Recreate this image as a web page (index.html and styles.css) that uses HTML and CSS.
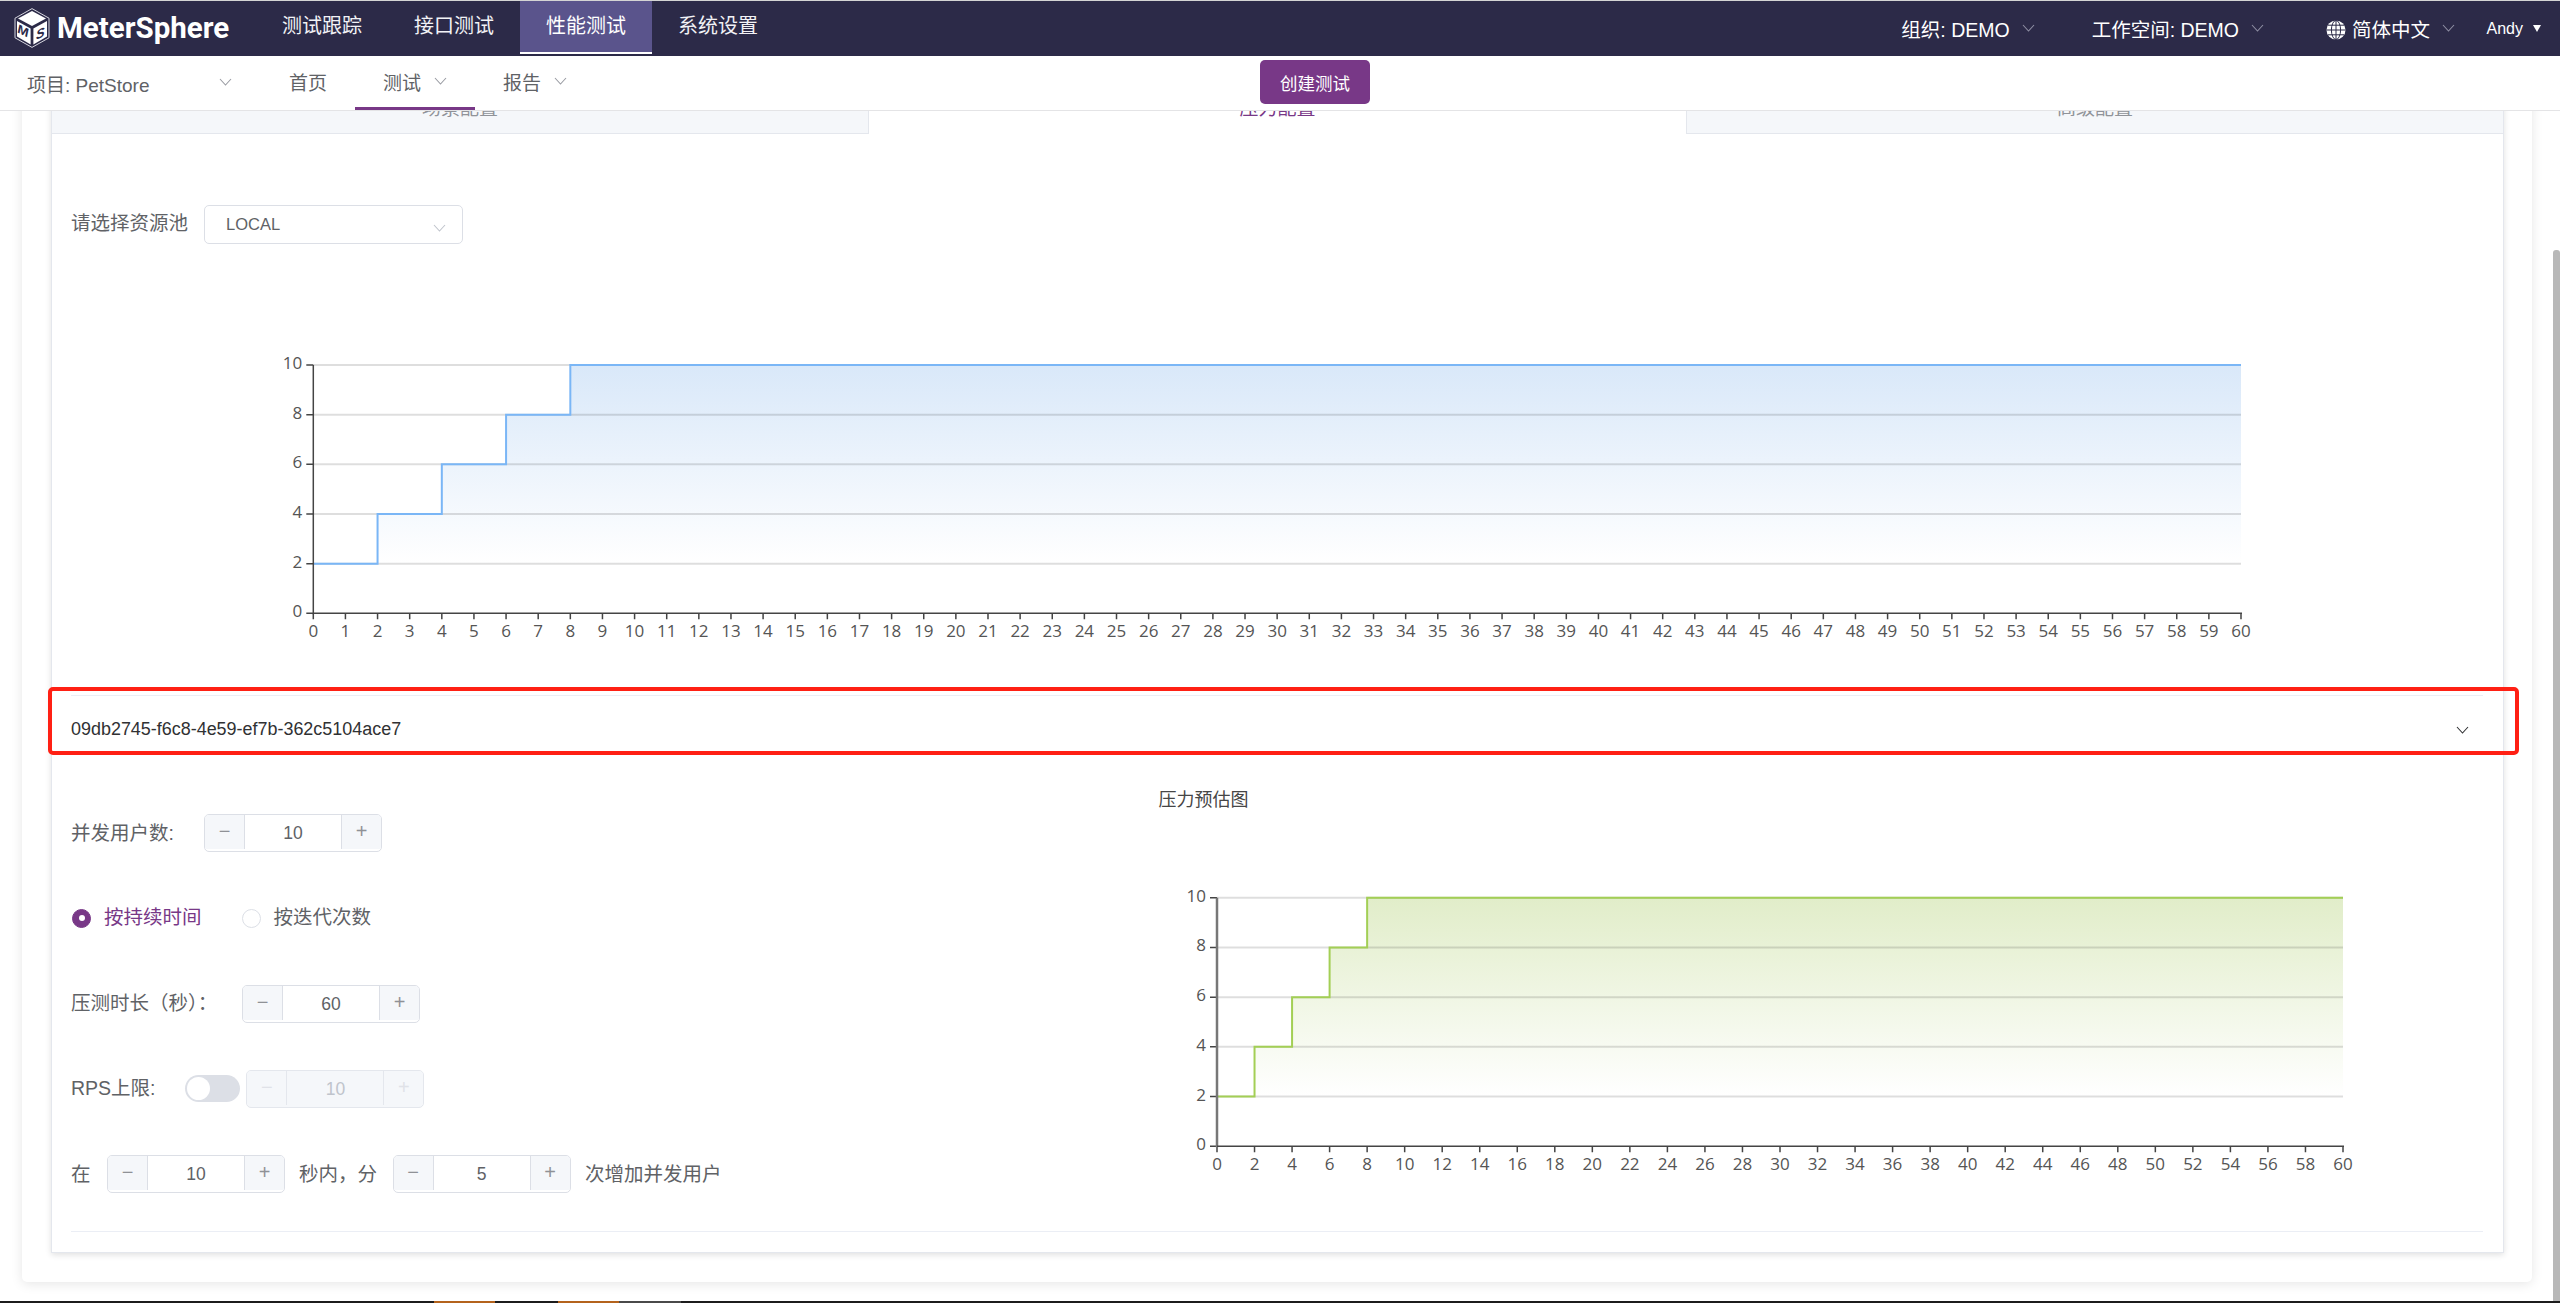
FILE: index.html
```html
<!DOCTYPE html>
<html lang="zh-CN">
<head>
<meta charset="utf-8">
<title>MeterSphere</title>
<link rel="stylesheet" href="styles.css">
</head>
<body>
<header class="topbar">
  <div class="brand">
    <svg class="logo" viewBox="0 0 36 40" aria-hidden="true">
      <polygon class="logo-hex" points="18,0.6 35,10.2 35,29.8 18,39.4 1,29.8 1,10.2"/>
      <polygon class="logo-face" points="18,3 32,10.5 18,18 4,10.5"/>
      <polygon class="logo-face" points="3,13 16.6,20.5 16.6,36.4 3,28.6"/>
      <polygon class="logo-face" points="19.4,20.5 33,13 33,28.6 19.4,36.4"/>
      <text class="logo-letter" transform="matrix(1 .5 0 1 3.6 24.5)">M</text>
      <text class="logo-letter" transform="matrix(1 -.5 0 1 22 32)">S</text>
    </svg>
    <span class="brand-name">MeterSphere</span>
  </div>
  <nav class="topnav">
    <a class="topnav-item">测试跟踪</a>
    <a class="topnav-item">接口测试</a>
    <a class="topnav-item is-active">性能测试</a>
    <a class="topnav-item">系统设置</a>
  </nav>
  <div class="account">
    <span class="account-item account-org">组织: DEMO<svg class="chev chev-nav" viewBox="0 0 13 8"><path d="M1 1l5.5 6L12 1"/></svg></span>
    <span class="account-item account-space">工作空间: DEMO<svg class="chev chev-nav" viewBox="0 0 13 8"><path d="M1 1l5.5 6L12 1"/></svg></span>
    <span class="account-item account-lang">
      <svg class="globe" viewBox="0 0 20 20" aria-hidden="true">
        <circle class="globe-disc" cx="10" cy="10" r="9.5"/>
        <path class="globe-line" d="M10 .5v19M.5 10h19M2 5.2h16M2 14.8h16"/>
        <ellipse class="globe-line" cx="10" cy="10" rx="4.6" ry="9.5"/>
      </svg>简体中文<svg class="chev chev-nav" viewBox="0 0 13 8"><path d="M1 1l5.5 6L12 1"/></svg>
    </span>
    <span class="account-user">Andy<i class="caret"></i></span>
  </div>
</header>

<div class="subbar">
  <div class="subbar-menu">
    <div class="project">项目: PetStore<svg class="chev" viewBox="0 0 13 8"><path d="M1 1l5.5 6L12 1"/></svg></div>
    <a class="subnav-item">首页</a>
    <a class="subnav-item is-active">测试<svg class="chev" viewBox="0 0 13 8"><path d="M1 1l5.5 6L12 1"/></svg></a>
    <a class="subnav-item">报告<svg class="chev" viewBox="0 0 13 8"><path d="M1 1l5.5 6L12 1"/></svg></a>
  </div>
  <button class="create-btn" type="button">创建测试</button>
</div>

<main class="viewport">
  <div class="panel">
    <section class="card">
      <div class="tabs">
        <div class="tab tab-left">场景配置</div>
        <div class="tab tab-active">压力配置</div>
        <div class="tab tab-right">高级配置</div>
      </div>
      <div class="card-body">
        <div class="pool-row">
          <label class="pool-label">请选择资源池</label>
          <div class="select"><span>LOCAL</span><svg class="chev chev-select" viewBox="0 0 13 8"><path d="M1 1l5.5 6L12 1"/></svg></div>
        </div>
        <svg id="chart-total" class="chart chart-total" viewBox="71 244 2412 451"></svg>
        <div class="collapse-head">
          <span>09db2745-f6c8-4e59-ef7b-362c5104ace7</span>
          <svg class="chev chev-collapse" viewBox="0 0 13 8"><path d="M1 1l5.5 6L12 1"/></svg>
        </div>
        <div class="config">
          <div class="config-form">
            <div class="field">
              <span class="field-label label-users">并发用户数:</span>
              <div class="stepper"><span class="step-btn">−</span><span class="step-value">10</span><span class="step-btn">+</span></div>
            </div>
            <div class="field">
              <span class="radio is-checked"></span><span class="radio-text is-checked">按持续时间</span>
              <span class="radio radio-second"></span><span class="radio-text">按迭代次数</span>
            </div>
            <div class="field">
              <span class="field-label label-duration">压测时长（秒）：</span>
              <div class="stepper"><span class="step-btn">−</span><span class="step-value">60</span><span class="step-btn">+</span></div>
            </div>
            <div class="field">
              <span class="field-label label-rps">RPS上限:</span>
              <span class="switch"><i class="switch-knob"></i></span>
              <div class="stepper is-disabled"><span class="step-btn">−</span><span class="step-value">10</span><span class="step-btn">+</span></div>
            </div>
            <div class="field">
              <span class="field-label text-in">在</span>
              <div class="stepper"><span class="step-btn">−</span><span class="step-value">10</span><span class="step-btn">+</span></div>
              <span class="field-label text-mid">秒内，分</span>
              <div class="stepper"><span class="step-btn">−</span><span class="step-value">5</span><span class="step-btn">+</span></div>
              <span class="field-label text-end">次增加并发用户</span>
            </div>
          </div>
          <svg id="chart-thread" class="chart chart-thread" viewBox="1150 760 1333 439"></svg>
        </div>
      </div>
    </section>
  </div>
  <div class="highlight"></div>
  <div class="scroll-thumb"></div>
</main>
<div class="taskbar"></div>
<script src="chart.js"></script>
</body>
</html>
```
FILE: styles.css
```css
* { box-sizing: border-box; }
html, body { margin: 0; height: 100%; }
body {
  display: flex;
  flex-direction: column;
  height: 1303px;
  overflow: hidden;
  background: #fff;
  color: #606266;
  font-family: "Liberation Sans", "Noto Sans CJK SC", sans-serif;
  font-size: 19.5px;
  border-top: 1px solid #d4d4d4;
}

/* top bar */
.topbar {
  flex: none;
  display: flex;
  align-items: center;
  height: 55px;
  background: #2c2a48;
  color: #fff;
}
.brand { display: flex; align-items: center; width: 256px; padding-left: 14px; }
.logo { width: 36px; height: 40px; flex: none; margin-top: -1px; }
.logo-hex { fill: none; stroke: #d5d5de; stroke-width: 1; }
.logo-face { fill: #fff; }
.logo-letter { font: italic 700 13px "Liberation Sans", sans-serif; fill: #2c2a48; }
.brand-name {
  margin-left: 7px;
  font: 700 29.5px/1 Roboto, sans-serif;
  color: #fff;
}
.topnav { display: flex; align-self: flex-start; }
.topnav-item {
  width: 132px;
  height: 53px;
  line-height: 50px;
  text-align: center;
  font-size: 20px;
  color: #f2f2f6;
  border-bottom: 2px solid transparent;
}
.topnav-item.is-active { background: #5a548c; border-bottom-color: #fff; color: #fff; }
.account { display: flex; align-items: center; margin-left: auto; padding-right: 19px; font-size: 19.5px; }
.account-item { display: flex; align-items: center; white-space: nowrap; }
.account-org { margin-right: 57px; }
.account-space { margin-right: 62px; }
.account-lang { margin-right: 31.5px; }
.account-user { display: flex; align-items: center; font-size: 16px; }
.caret {
  width: 0;
  height: 0;
  margin-left: 10px;
  border: 4.5px solid transparent;
  border-top: 7px solid #fff;
  border-bottom: 0;
}
.globe { width: 20px; height: 20px; margin-right: 6px; margin-top: 3px; }
.globe-disc { fill: #fff; }
.globe-line { fill: none; stroke: #2c2a48; stroke-width: 1; }
.chev { width: 13px; height: 8px; flex: none; margin-left: 13px; }
.chev path { fill: none; stroke: #9a9ca3; stroke-width: 1.1; }
.chev-nav { margin-left: 12px; margin-top: -2px; }
.chev-nav path { stroke: #8f8fa3; }

/* sub bar */
.subbar {
  flex: none;
  display: flex;
  align-items: center;
  height: 55px;
  border-bottom: 1px solid #e4e4e6;
  background: #fff;
}
.subbar-menu { display: flex; align-items: stretch; width: 1260px; height: 100%; }
.project {
  display: flex;
  align-items: center;
  width: 261px;
  padding: 1px 0 0 27px;
  font-size: 19px;
  white-space: nowrap;
}
.project .chev { margin-left: 69px; margin-top: -4px; }
.subnav-item {
  display: flex;
  align-items: center;
  padding: 0 28px;
  font-size: 19px;
  border-bottom: 3px solid transparent;
  white-space: nowrap;
}
.subnav-item .chev { margin-top: -1px; }
.subnav-item.is-active { border-bottom-color: #783887; }
.create-btn {
  width: 110px;
  height: 44px;
  margin-top: -2px;
  padding: 0;
  border: 0;
  border-radius: 5px;
  background: #783887;
  color: #fff;
  font: inherit;
  font-size: 17.5px;
}

/* scrolled content */
.viewport { position: relative; flex: 1; min-height: 0; overflow: hidden; }
.panel {
  width: 2510px;
  margin: -128px 0 0 22px;
  padding: 100px 28px 29px 29px;
  background: #fff;
  border-radius: 5px;
  box-shadow: 0 2px 12px rgba(0, 0, 0, .1);
}
.card {
  border: 1px solid #e4e7ed;
  background: #fff;
  box-shadow: 0 2px 6px rgba(0, 0, 0, .12);
}
.tabs { display: grid; grid-template-columns: repeat(3, 1fr); height: 50px; }
.tab {
  height: 50px;
  line-height: 49px;
  text-align: center;
  font-size: 19px;
  color: #909399;
  background: #f5f7fa;
  border-bottom: 1px solid #e4e7ed;
}
.tab-left { border-right: 1px solid #e4e7ed; }
.tab-right { border-left: 1px solid #e4e7ed; }
.tab-active { background: #fff; border-bottom: 0; color: #783887; }
.card-body { padding: 0 20px 20px 19px; }
.pool-row { display: flex; align-items: center; height: 39px; margin-top: 71px; }
.pool-label { width: 133px; padding-bottom: 6px; }
.select {
  display: flex;
  align-items: center;
  justify-content: space-between;
  width: 259px;
  height: 39px;
  padding: 0 16px 0 21px;
  border: 1px solid #dcdfe6;
  border-radius: 5px;
  font-size: 16.5px;
}
.chev-select { margin-top: 7px; }
.chev-select path { stroke: #c0c4cc; }
.chart { display: block; }
.chart-total { width: 2412px; height: 451px; }
.chart-thread { width: 1333px; height: 439px; }
.chart-title { font: 18px "Liberation Sans", "Noto Sans CJK SC", sans-serif; fill: #464646; }
.chart-label { font: 17px "Open Sans", sans-serif; fill: #555; }
.collapse-head {
  display: flex;
  align-items: center;
  justify-content: space-between;
  height: 65px;
  padding: 2px 14px 0 0;
  border-top: 1px solid #ebeef5;
  color: #303133;
  font-size: 17.95px;
}
.chev-collapse { margin-top: 1px; }
.chev-collapse path { stroke: #303133; }
.config {
  display: grid;
  grid-template-columns: 1079px 1333px;
  border-bottom: 1px solid #ebeef5;
}
.config-form {
  display: flex;
  flex-direction: column;
  gap: 47.3px;
  padding: 54px 0 38px;
}
.field { display: flex; align-items: center; height: 38px; white-space: nowrap; }
.field-label { flex: none; padding-bottom: 4px; }
.label-users { width: 133px; }
.label-duration { width: 171px; }
.label-rps { width: 114px; }

.stepper {
  display: flex;
  flex: none;
  width: 178px;
  height: 38px;
  border: 1px solid #dcdfe6;
  border-radius: 5px;
  overflow: hidden;
  font-size: 17.5px;
}
.step-btn {
  flex: none;
  width: 40px;
  height: 34px;
  line-height: 33px;
  text-align: center;
  background: #f5f7fa;
  color: #8f9196;
  font-size: 20px;
}
.step-btn:first-child { border-right: 1px solid #dcdfe6; }
.step-btn:last-child { border-left: 1px solid #dcdfe6; }
.step-value { flex: 1; line-height: 36px; text-align: center; }
.stepper.is-disabled { background: #f5f7fa; border-color: #e4e7ed; color: #c0c4cc; }
.stepper.is-disabled .step-btn { color: #e0e2e8; }
.stepper.is-disabled .step-btn:first-child,
.stepper.is-disabled .step-btn:last-child { border-color: #e4e7ed; }

.radio {
  flex: none;
  display: flex;
  align-items: center;
  justify-content: center;
  width: 19px;
  height: 19px;
  margin-left: 1px;
  border: 1px solid #dcdfe6;
  border-radius: 50%;
}
.radio.is-checked { background: #783887; border-color: #783887; }
.radio.is-checked::after { content: ""; width: 6px; height: 6px; border-radius: 50%; background: #fff; }
.radio-second { margin-left: 40px; }
.radio-text { margin-left: 13px; padding-bottom: 6px; }
.radio-text.is-checked { color: #783887; }

.switch {
  position: relative;
  flex: none;
  width: 55px;
  height: 27px;
  border-radius: 14px;
  background: #dcdfe6;
}
.switch-knob {
  position: absolute;
  top: 2px;
  left: 2px;
  width: 23px;
  height: 23px;
  border-radius: 50%;
  background: #fff;
}
.switch + .stepper { margin-left: 6.4px; }
.text-in { width: 36px; }
.text-mid { margin: 0 15.5px 0 14px; }
.text-end { margin-left: 14.5px; }

.highlight {
  position: absolute;
  top: 576px;
  left: 48px;
  width: 2471px;
  height: 68px;
  border: 4px solid #ff2014;
  border-radius: 5px;
}
.scroll-thumb {
  position: absolute;
  top: 139px;
  bottom: 0;
  right: 0;
  width: 7px;
  background: #b8b8b8;
  border-radius: 3px 3px 0 0;
}
.taskbar {
  flex: none;
  height: 2px;
  background: linear-gradient(90deg,
    #1c1c1c 434px, #b4631c 434px, #b4631c 495px,
    #1c1c1c 495px, #1c1c1c 558px, #b4631c 558px, #b4631c 619px,
    #4a4a4a 619px, #4a4a4a 681px, #1c1c1c 681px);
}
```
FILE: chart.js
```js
(function () {
  var NS = 'http://www.w3.org/2000/svg';

  function add(parent, name, attrs, text) {
    var node = document.createElementNS(NS, name);
    Object.keys(attrs).forEach(function (k) { node.setAttribute(k, attrs[k]); });
    if (text !== undefined) node.textContent = text;
    parent.appendChild(node);
    return node;
  }

  function draw(id, o) {
    var svg = document.getElementById(id);
    var sx = function (v) { return o.x0 + (o.x1 - o.x0) * v / 60; };
    var sy = function (v) { return o.y0 + (o.y10 - o.y0) * v / 10; };

    var defs = add(svg, 'defs', {});
    var grad = add(defs, 'linearGradient', {
      id: id + '-fill', gradientUnits: 'userSpaceOnUse',
      x1: 0, x2: 0, y1: sy(10), y2: sy(2)
    });
    add(grad, 'stop', { offset: 0, 'stop-color': o.fill });
    add(grad, 'stop', { offset: 1, 'stop-color': '#ffffff' });

    var pts = [[0, 2], [2, 2], [2, 4], [4, 4], [4, 6], [6, 6], [6, 8], [8, 8], [8, 10], [60, 10]];
    var line = pts.map(function (p) { return sx(p[0]) + ',' + sy(p[1]); }).join(' ');
    add(svg, 'polygon', { points: line + ' ' + sx(60) + ',' + sy(2) + ' ' + sx(0) + ',' + sy(2), fill: 'url(#' + id + '-fill)' });

    [2, 4, 6, 8, 10].forEach(function (v) {
      add(svg, 'line', { x1: sx(0), x2: sx(60), y1: sy(v), y2: sy(v), stroke: 'rgba(0,0,0,.13)', 'stroke-width': 2 });
    });
    add(svg, 'polyline', { points: line, fill: 'none', stroke: o.line, 'stroke-width': 2 });

    var ticks = '';
    for (var y = 0; y <= 10; y += 2) {
      ticks += 'M' + (sx(0) - 7) + ' ' + sy(y) + 'H' + sx(0);
      add(svg, 'text', { class: 'chart-label', x: sx(0) - 11, y: sy(y) + 4, 'text-anchor': 'end' }, y);
    }
    for (var x = 0; x <= 60; x += o.every) {
      ticks += 'M' + sx(x) + ' ' + sy(0) + 'v6';
      add(svg, 'text', { class: 'chart-label', x: sx(x), y: sy(0) + 24, 'text-anchor': 'middle' }, x);
    }
    add(svg, 'path', { d: ticks, fill: 'none', stroke: o.axis, 'stroke-width': 1.5 });
    add(svg, 'line', { x1: sx(0), x2: sx(0), y1: sy(10), y2: sy(0) + 1, stroke: o.yAxis, 'stroke-width': o.yWidth });
    add(svg, 'line', { x1: sx(0), x2: sx(60) + 1, y1: sy(0), y2: sy(0), stroke: o.axis, 'stroke-width': 1.5 });

    if (o.title) add(svg, 'text', { class: 'chart-title', x: o.title[0], y: o.title[1] }, o.title[2]);
  }

  draw('chart-total', {
    x0: 313.3, x1: 2241, y10: 365, y0: 613.3, every: 1,
    fill: '#d9e8f9', line: '#7ab6f6', axis: '#444', yAxis: '#444', yWidth: 1.5
  });
  draw('chart-thread', {
    x0: 1217, x1: 2343, y10: 897.7, y0: 1146.3, every: 2,
    fill: '#e1edc9', line: '#a3cf55', axis: '#444', yAxis: '#777', yWidth: 2.5,
    title: [1158.5, 806, '压力预估图']
  });
})();
```
